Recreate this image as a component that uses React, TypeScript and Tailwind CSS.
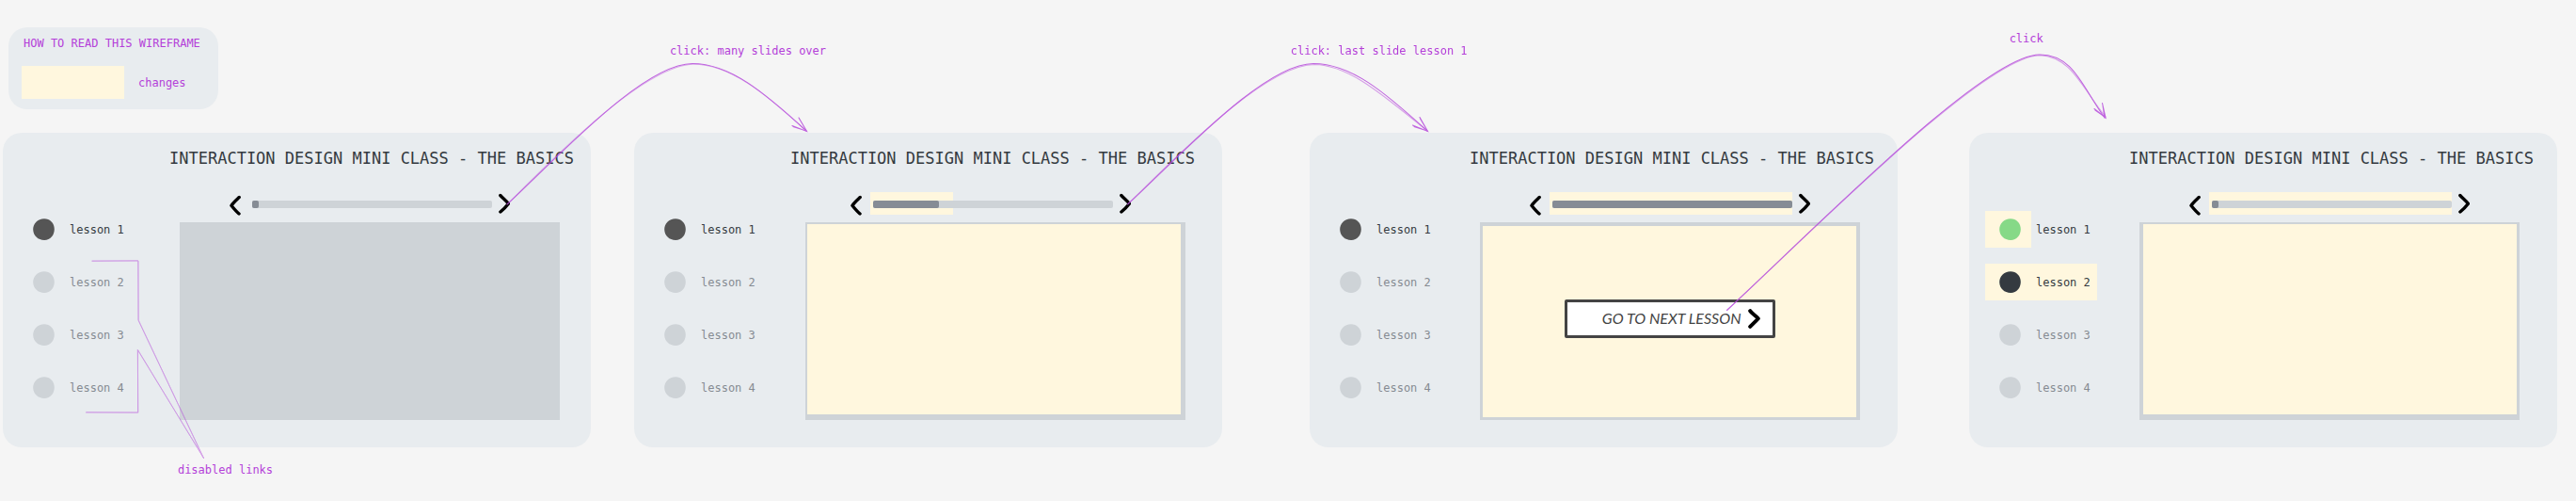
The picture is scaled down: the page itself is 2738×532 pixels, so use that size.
type LessonState = 'current' | 'disabled' | 'done' | 'next';

type Frame = {
  id: string;
  margin: string;
  titleMargin: string;
  controlsMargin: string;
  slideClass: string;
  fill: string;
  highlight?: string;
  lessons: LessonState[];
  cta?: boolean;
};

const frames: Frame[] = [
  {
    id: 'start',
    margin: 'ml-[3px]',
    titleMargin: 'ml-[24px]',
    controlsMargin: 'ml-[88px] mr-[86px]',
    slideClass: 'ml-[35px] mr-[33px] bg-[#ced3d7] border-0',
    fill: 'w-[7px]',
    lessons: ['current', 'disabled', 'disabled', 'disabled'],
  },
  {
    id: 'middle',
    margin: 'ml-[46px]',
    titleMargin: 'ml-[13px]',
    controlsMargin: 'ml-[77px] mr-[97px]',
    slideClass: 'ml-[29px] mr-[39px] bg-[#fff7de] border-t-2 border-l-2 border-r-[5px] border-b-[6px]',
    fill: 'w-[70px]',
    highlight: 'w-[88px]',
    lessons: ['current', 'disabled', 'disabled', 'disabled'],
  },
  {
    id: 'last',
    margin: 'ml-[93px]',
    titleMargin: 'ml-[17px]',
    controlsMargin: 'ml-[81px] mr-[93px]',
    slideClass: 'ml-[28px] mr-[40px] bg-[#fff7de] border-t-4 border-l-[3px] border-r-4 border-b-[3px]',
    fill: 'w-full',
    highlight: 'right-0',
    lessons: ['current', 'disabled', 'disabled', 'disabled'],
    cta: true,
  },
  {
    id: 'next-lesson',
    margin: 'ml-[76px]',
    titleMargin: 'ml-[17px]',
    controlsMargin: 'ml-[81px] mr-[93px]',
    slideClass: 'ml-[28px] mr-[40px] bg-[#fff7de] border-t-2 border-l-4 border-r-[3px] border-b-[6px]',
    fill: 'w-[7px]',
    highlight: 'right-0',
    lessons: ['done', 'next', 'disabled', 'disabled'],
  },
];

const dotColor: Record<LessonState, string> = {
  current: 'fill-[#555555]',
  disabled: 'fill-[#ced3d7]',
  done: 'fill-[#86d987]',
  next: 'fill-[#343a40]',
};

function Lesson({ index, state }: { index: number; state: LessonState }) {
  const disabled = state === 'disabled';
  return (
    <li>
      <a
        href={`#lesson-${index}`}
        aria-disabled={disabled}
        className={`flex h-[39px] w-fit items-center pr-[7px] ${state === 'next' ? 'bg-[#fff7de]' : ''} ${
          disabled ? 'text-[#868b92]' : 'text-[#343a40]'
        }`}
      >
        <span className={`flex h-full w-[49px] items-center pl-[15px] ${state === 'done' ? 'bg-[#fff7de]' : ''}`}>
          <svg width="23" height="23" viewBox="0 0 23 23" className={dotColor[state]} aria-hidden="true">
            <path d="M12 .2C18 .2 23 5 22.8 11.5 22.7 18 18.5 22.8 12.3 22.9 5.500 23 .5 18.500.2 12 0 5.500 5 .2 12 .2Z" />
          </svg>
        </span>
        <span className="ml-[5px] whitespace-pre">lesson {index}</span>
      </a>
    </li>
  );
}

function Controls({ frame }: { frame: Frame }) {
  return (
    <div className={`mt-6 flex h-[25px] items-start ${frame.controlsMargin}`}>
      <button type="button" aria-label="Previous slide" className="shrink-0">
        <svg width="12" height="25" viewBox="0 0 12 25" fill="none" stroke="#000" strokeWidth="3.4" strokeLinecap="round" strokeLinejoin="round">
          <path d="M10.200 5.500C7 8.500 4 11 1.900 14.300 4.500 17.500 7 20.500 10 23" />
        </svg>
      </button>
      <div className="relative mt-[9px] ml-3 h-2 min-w-0 flex-1">
        {frame.highlight && (
          <div className={`absolute -top-[9px] -left-[3px] h-6 bg-[#fff7de] ${frame.highlight}`} />
        )}
        <div className="relative h-2 rounded-xs bg-[#ced3d7]">
          <div className={`h-2 rounded-xs bg-[#868c95] ${frame.fill}`} />
        </div>
      </div>
      <button type="button" aria-label="Next slide" className="ml-[7px] shrink-0">
        <svg width="12" height="25" viewBox="0 0 12 25" fill="none" stroke="#000" strokeWidth="3.4" strokeLinecap="round" strokeLinejoin="round">
          <path d="M1.800 3.500C4.500 6.500 8 9 10.400 12.300 8 15.500 5 18.500 1.900 21" />
        </svg>
      </button>
    </div>
  );
}

function Panel({ frame }: { frame: Frame }) {
  return (
    <section className={`flex min-w-0 flex-1 rounded-[20px] bg-[#e8ecef] pb-[29px] ${frame.margin}`}>
      <nav className="ml-[17px] w-[136px] shrink-0 pt-[83px]" aria-label="Lessons">
        <ul className="flex flex-col gap-[17px]">
          {frame.lessons.map((state, i) => (
            <Lesson key={i} index={i + 1} state={state} />
          ))}
        </ul>
      </nav>
      <div className="min-w-0 flex-1 pt-[15px]">
        <h2 className={`text-[17px] leading-6 whitespace-nowrap text-[#343a40] ${frame.titleMargin}`}>
          INTERACTION DESIGN MINI CLASS - THE BASICS
        </h2>
        <Controls frame={frame} />
        <div className={`mt-[7px] flex h-[210px] items-center justify-center border-[#ced3d7] ${frame.slideClass}`}>
          {frame.cta && (
            <button
              type="button"
              className="mb-[7px] flex h-[41px] w-56 items-center justify-end gap-[7px] rounded-xs border-3 border-[#444444] bg-white pr-[13px] font-['Lato',sans-serif] text-base whitespace-nowrap text-[#444444] italic"
            >
              GO TO NEXT LESSON
              <svg width="13" height="21" viewBox="0 0 13 21" fill="none" stroke="#000" strokeWidth="4" strokeLinecap="round" strokeLinejoin="round" aria-hidden="true">
                <path d="M2.200 2.200C4 5 8 7 10.800 10.300 8 13.500 5 16 2.200 18.800" />
              </svg>
            </button>
          )}
        </div>
      </div>
    </section>
  );
}

function Connectors() {
  return (
    <svg
      className="pointer-events-none absolute top-0 left-0 h-[532px] w-full"
      viewBox="0 0 2738 532"
      preserveAspectRatio="none"
      fill="none"
      stroke="#b64bdb"
      strokeLinecap="round"
      aria-hidden="true"
    >
      <g strokeWidth="1.1" opacity="0.85">
        <path d="M539 217C598 162 684 68 736 67.500 776 67.500 812 98 857 139" />
        <path d="M540 216C596 160 686 69.500 737 68.200 775 68 814 99 856.500 138.500" opacity="0.5" />
        <path d="M849 125 857.500 139.500 842 133.500M849.500 126 857 138.500M843 134.500 857 139" />
        <path d="M1198.500 217C1258 162 1344 68 1396 67.500 1436 67.500 1472 98 1517 139" />
        <path d="M1199.500 216C1258 159 1346 69 1397 68.500 1434 69 1470 101 1516.500 138.500" opacity="0.6" />
        <path d="M1509 124.500 1517.500 139.500 1501.500 133M1509.500 126 1517 138.500M1503 134.500 1517 139" />
        <path d="M1835.500 329.500C1932 240 2110 58 2168 58 2204 58 2213 92 2237 125" />
        <path d="M1836 329C1933 239 2110 60 2168 58.600 2202 60 2213 94 2238 124" opacity="0.6" />
        <path d="M2234.500 109.500 2238 125 2226 115.500M2235 112 2237 125M2227 117 2237 124" />
      </g>
      <g strokeWidth="1" opacity="0.5">
        <path d="M98 277H147V340L216.500 486.500" />
        <path d="M98 277.500 146.500 276.600 147.300 340 216 486" opacity="0.6" />
        <path d="M91.500 438H146.500V371.500L216.500 486.500" />
        <path d="M92 437.500 147 438.200 146.200 371.500 216 485.500" opacity="0.6" />
      </g>
    </svg>
  );
}

export default function App() {
  return (
    <main className="relative min-h-screen overflow-x-hidden bg-[#f5f5f5] pt-[29px] pb-14 font-['DejaVu_Sans_Mono',monospace] text-xs">
      <aside className="ml-[9px] h-[87px] w-[223px] rounded-[20px] bg-[#e8ecef] pt-[9px] pl-[14px] text-[#b43fd9]">
        <h1 className="ml-0.5 whitespace-nowrap">HOW TO READ THIS WIREFRAME</h1>
        <div className="mt-4 flex items-center gap-[15px]">
          <div className="h-[35px] w-[109px] bg-[#fff7de]" />
          <span>changes</span>
        </div>
      </aside>

      <div className="mt-[25px] flex pr-5">
        {frames.map((frame) => (
          <Panel key={frame.id} frame={frame} />
        ))}
      </div>

      <Connectors />
      <p className="absolute top-[46px] left-[26%] whitespace-nowrap text-[#b43fd9]">click: many slides over</p>
      <p className="absolute top-[46px] left-[50.1%] whitespace-nowrap text-[#b43fd9]">click: last slide lesson 1</p>
      <p className="absolute top-[33px] left-[78%] whitespace-nowrap text-[#b43fd9]">click</p>
      <p className="absolute top-[491px] left-[6.900%] whitespace-nowrap text-[#b43fd9]">disabled links</p>
    </main>
  );
}
